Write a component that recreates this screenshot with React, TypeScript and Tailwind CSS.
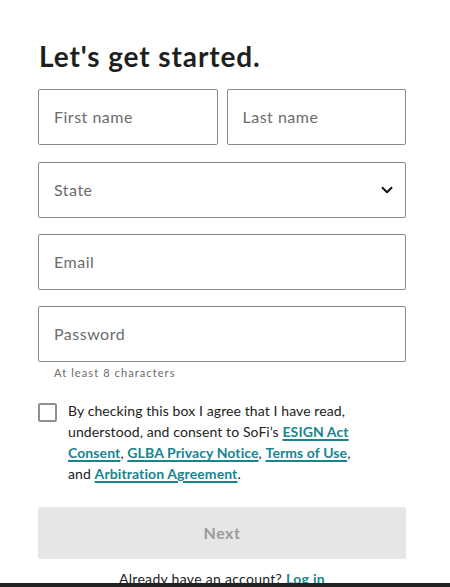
import { ChevronDown } from 'lucide-react'

const font = { fontFamily: 'Lato, "Open Sans", sans-serif' }

function Field({ label, className = '' }: { label: string; className?: string }) {
  return (
    <div
      className={`h-[56px] flex items-center px-[15px] border border-[#8a8a8a] rounded-[2px] bg-white text-[16px] tracking-[0.5px] text-[#6b6b6b] ${className}`}
    >
      {label}
    </div>
  )
}

function Link({ children }: { children: React.ReactNode }) {
  return (
    <a href="#" className="font-bold text-[#16858f] underline underline-offset-2 decoration-[1.5px]">
      {children}
    </a>
  )
}

export default function App() {
  return (
    <div className="relative w-[450px] h-[587px] overflow-hidden bg-white" style={font}>
      <div className="w-[368px] ml-[38px] pt-[39px]">
        <h1 className="text-[28px] leading-[34px] font-bold text-[#1f1f1f] tracking-[0.9px] pl-[1px]">
          Let's get started.
        </h1>

        <div className="flex gap-[9px] mt-[16px]">
          <Field label="First name" className="flex-1" />
          <Field label="Last name" className="flex-1" />
        </div>

        <div className="mt-[17px] h-[56px] flex items-center justify-between pl-[15px] pr-[9px] border border-[#8a8a8a] rounded-[2px] text-[16px] tracking-[0.5px] text-[#6b6b6b]">
          <span>State</span>
          <ChevronDown size={18} strokeWidth={2.6} className="text-[#111]" />
        </div>

        <Field label="Email" className="mt-[16px]" />

        <Field label="Password" className="mt-[16px]" />
        <p className="mt-[3px] pl-[16px] text-[11px] leading-[15px] tracking-[1.1px] text-[#6b6b6b]">
          At least 8 characters
        </p>

        <div className="flex gap-[11px] mt-[22px]">
          <div className="w-[19px] h-[19px] shrink-0 mt-[1px] border-2 border-[#8f8f8f] rounded-[2px]" />
          <p className="text-[14px] leading-[21px] tracking-[0.1px] text-[#222] w-[300px] -mt-[2px]">
            By checking this box I agree that I have read, understood, and consent to SoFi’s{' '}
            <Link>ESIGN Act Consent</Link>, <Link>GLBA Privacy Notice</Link>, <Link>Terms of Use</Link>, and{' '}
            <Link>Arbitration Agreement</Link>.
          </p>
        </div>

        <button
          type="button"
          disabled
          className="mt-[23px] w-full h-[52px] bg-[#e6e6e6] text-[#9a9a9a] text-[16px] font-bold tracking-[0.5px] rounded-[2px]"
        >
          Next
        </button>

        <p className="mt-[9px] text-center text-[14px] tracking-[0.3px] text-[#222]">
          Already have an account? <span className="font-bold text-[#16858f]">Log in</span>
        </p>
      </div>

      {/* bottom dark bar overlay */}
      <div className="absolute left-0 right-0 bottom-0 h-[4px] bg-[#222]" />
    </div>
  )
}
